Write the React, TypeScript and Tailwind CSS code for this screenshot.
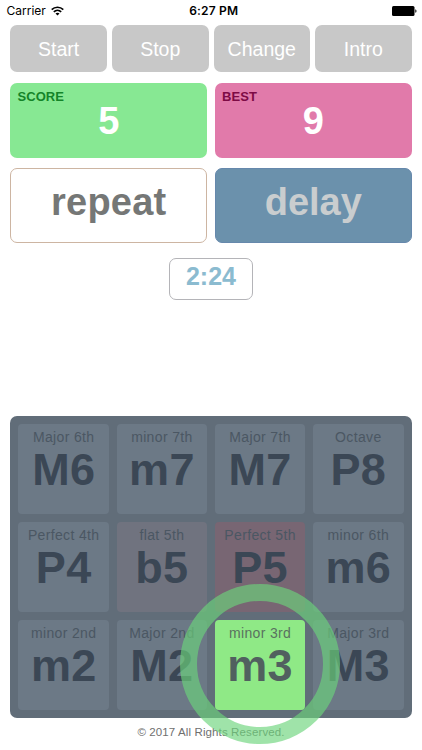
import clsx from 'clsx';

const tiles = [
  { name: 'Major 6th', short: 'M6' },
  { name: 'minor 7th', short: 'm7' },
  { name: 'Major 7th', short: 'M7' },
  { name: 'Octave', short: 'P8' },
  { name: 'Perfect 4th', short: 'P4' },
  { name: 'flat 5th', short: 'b5', state: 'faded' },
  { name: 'Perfect 5th', short: 'P5', state: 'wrong' },
  { name: 'minor 6th', short: 'm6' },
  { name: 'minor 2nd', short: 'm2' },
  { name: 'Major 2nd', short: 'M2' },
  { name: 'minor 3rd', short: 'm3', state: 'correct' },
  { name: 'Major 3rd', short: 'M3' },
];

const actions = ['Start', 'Stop', 'Change', 'Intro'];

function StatusBar() {
  return (
    <div className="grid grid-cols-3 items-center h-[22px] pl-[6.5px] pr-[5px] font-['Inter',sans-serif] text-[12px] leading-[22px] text-black">
      <div className="flex items-center gap-[5px]">
        <span>Carrier</span>
        <svg className="w-[13px] h-[10px]" viewBox="0 0 13 10" fill="none" stroke="#000" strokeWidth="1.6">
          <path d="M0.7 3.6C3.9 0.4 9.1 0.4 12.3 3.6" />
          <path d="M2.8 5.8C4.9 3.8 8.1 3.8 10.2 5.8" />
          <path d="M6.5 9.4L4.5 7.4C5.6 6.4 7.4 6.4 8.5 7.4Z" fill="#000" stroke="none" />
        </svg>
      </div>
      <span className="text-center font-semibold tracking-[0.2px] pl-1">6:27 PM</span>
      <svg className="w-[25px] h-[10px] justify-self-end" viewBox="0 0 25 10">
        <rect x="0" y="0" width="22.5" height="10" rx="1.5" />
        <path d="M23.3 3.2C24.9 3.7 24.9 6.3 23.3 6.8Z" />
      </svg>
    </div>
  );
}

function ScoreCard({ label, value, className, labelClass }: { label: string; value: number; className: string; labelClass: string }) {
  return (
    <div className={clsx('grid h-[75px] rounded-[7px] font-bold', className)}>
      <span className={clsx('col-start-1 row-start-1 pl-[7px] pt-[5px] text-[13px] leading-[18px] tracking-[0.1px]', labelClass)}>{label}</span>
      <span className="col-start-1 row-start-1 text-center text-[38px] leading-[76px] text-white">{value}</span>
    </div>
  );
}

function Tile({ name, short, state }: { name: string; short: string; state?: string }) {
  const correct = state === 'correct';
  return (
    <div
      className={clsx(
        'relative h-[90.3px] rounded-[4px] pt-1 text-center',
        !state && 'bg-[#6c7986]',
        state === 'faded' && 'bg-[#70737f]',
        state === 'wrong' && 'bg-[#786673]',
        correct && 'bg-[#8fe986]'
      )}
    >
      <div className={clsx('text-[14px] leading-[18px] tracking-[0.35px] whitespace-nowrap', correct ? 'text-[#5a7160]' : 'text-[#4b5763]')}>
        {name}
      </div>
      <div className={clsx('text-[45px] leading-[48px] tracking-[0.3px] font-bold', correct ? 'text-[#51605f]' : 'text-[#3b4755]')}>{short}</div>
      {/* Highlight ring around the right answer */}
      {correct && (
        <div className="absolute z-10 -left-[35px] -top-[35.5px] w-[160.4px] h-[160.4px] rounded-full border-[17.5px] border-[#6bd47b]/65" />
      )}
    </div>
  );
}

export default function App() {
  return (
    <div className="flex flex-col w-[422px] h-[750px] overflow-hidden bg-white font-['Liberation_Sans',sans-serif]">
      <StatusBar />

      <div className="flex flex-col px-[10.4px] pt-[2.8px]">
        <div className="grid grid-cols-4 gap-[5px]">
          {actions.map((label) => (
            <button key={label} className="h-[47.6px] rounded-[7px] bg-[#c8c8c8] pt-[3px] text-[19.5px] text-white">
              {label}
            </button>
          ))}
        </div>

        <div className="grid grid-cols-2 gap-x-2 gap-y-[10.4px] mt-[10.4px]">
          <ScoreCard label="SCORE" value={5} className="bg-[#87e893]" labelClass="text-[#148429]" />
          <ScoreCard label="BEST" value={9} className="bg-[#e17aaa]" labelClass="text-[#7d0a45]" />
          <button className="h-[75px] rounded-[7px] border border-[#cdb5a2] bg-white pb-[7px] text-[38px] leading-none tracking-[0.2px] font-bold text-[#757776]">
            repeat
          </button>
          <button className="h-[75px] rounded-[7px] border border-[#6688ac] bg-[#6b91ac] pb-[7px] text-[38px] leading-none font-bold text-[#c9cdcf]">
            delay
          </button>
        </div>

        <div className="self-center mt-[15px] w-[84px] h-[42px] rounded-[7px] border border-[#b4b4b8] text-center text-[25px] leading-[35px] font-bold text-[#8bbbd0]">
          2:24
        </div>

        <div className="grid grid-cols-4 gap-[7.6px] mt-[115.6px] p-2 pb-[7.8px] rounded-[7px] bg-[#616d79]">
          {tiles.map((tile) => (
            <Tile key={tile.short} {...tile} />
          ))}
        </div>

        <p className="mt-[6px] text-center text-[11.5px] leading-[16px] tracking-[0.12px] text-[#6f6f6f]">
          © 2017 All Rights Reserved.
        </p>
      </div>
    </div>
  );
}
